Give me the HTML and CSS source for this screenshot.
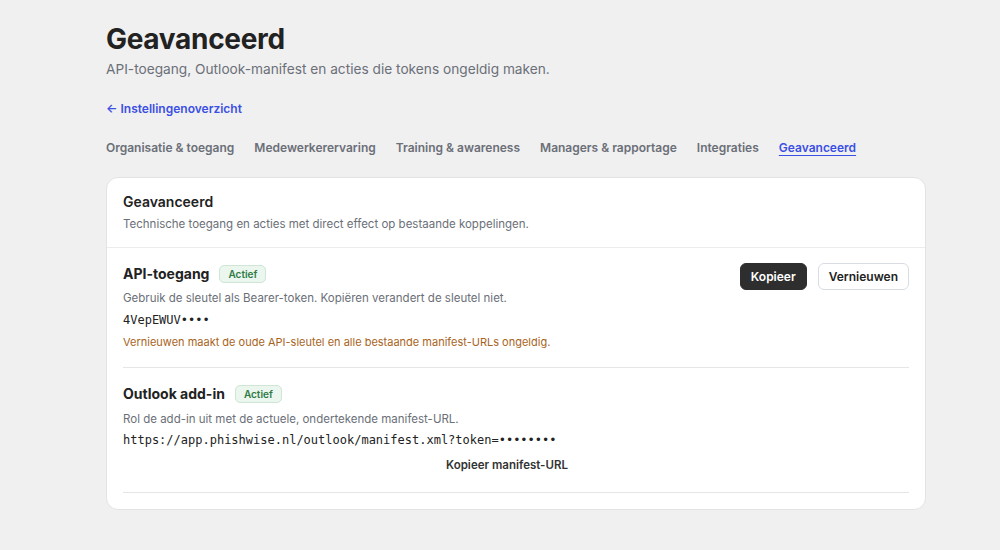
FILE: index.html
```html
<!DOCTYPE html>
<html lang="nl">
<head>
    <meta charset="UTF-8">
    <meta name="viewport" content="width=device-width, initial-scale=1.0">
    <title>Geavanceerd - Instellingen</title>
    <link rel="stylesheet" href="styles.css">
</head>
<body>
    <main class="page">
        <header class="page-header">
            <h1>Geavanceerd</h1>
            <p class="page-sub">API-toegang, Outlook-manifest en acties die tokens ongeldig maken.</p>
        </header>

        <a class="back-link" href="#">&larr; Instellingenoverzicht</a>

        <nav class="tabs">
            <a href="#">Organisatie &amp; toegang</a>
            <a href="#">Medewerkerervaring</a>
            <a href="#">Training &amp; awareness</a>
            <a href="#">Managers &amp; rapportage</a>
            <a href="#">Integraties</a>
            <a href="#" class="active">Geavanceerd</a>
        </nav>

        <section class="card">
            <div class="card-head">
                <h2>Geavanceerd</h2>
                <p>Technische toegang en acties met direct effect op bestaande koppelingen.</p>
            </div>

            <div class="card-body">
                <div class="setting">
                    <div class="setting-top">
                        <div class="setting-title">
                            <h3>API-toegang</h3>
                            <span class="badge">Actief</span>
                        </div>
                        <div class="actions">
                            <button type="button" class="btn btn-dark">Kopieer</button>
                            <button type="button" class="btn btn-light">Vernieuwen</button>
                        </div>
                    </div>
                    <p class="setting-desc">Gebruik de sleutel als Bearer-token. Kopiëren verandert de sleutel niet.</p>
                    <code class="secret">4VepEWUV••••</code>
                    <p class="warning">Vernieuwen maakt de oude API-sleutel en alle bestaande manifest-URLs ongeldig.</p>
                </div>

                <div class="setting">
                    <div class="setting-top">
                        <div class="setting-title">
                            <h3>Outlook add-in</h3>
                            <span class="badge">Actief</span>
                        </div>
                    </div>
                    <p class="setting-desc">Rol de add-in uit met de actuele, ondertekende manifest-URL.</p>
                    <code class="secret url">https://app.phishwise.nl/outlook/manifest.xml?token=••••••••</code>
                    <div class="link-row">
                        <button type="button" class="btn-text">Kopieer manifest-URL</button>
                    </div>
                </div>
            </div>
        </section>
    </main>
</body>
</html>
```

FILE: styles.css
```css
body {
    font-family: Inter, "Noto Sans", sans-serif;
    background-color: #f0f0f0;
    color: #222;
    margin: 0;
    padding: 0;
}
.page {
    width: 820px;
    margin-left: 106px;
    padding: 22px 0 40px;
    box-sizing: border-box;
}
h1 {
    font-size: 28px;
    font-weight: 700;
    margin: 0;
    letter-spacing: -0.3px;
    color: #222;
}
.page-sub {
    margin: 5px 0 0;
    font-size: 13.7px;
    color: #6b6f78;
}
.back-link {
    display: inline-block;
    margin-top: 24px;
    font-size: 12px;
    font-weight: 600;
    color: #3b4fe4;
    text-decoration: none;
}
.tabs {
    display: flex;
    gap: 20px;
    margin-top: 23px;
}
.tabs a {
    font-size: 12px;
    font-weight: 600;
    color: #6b6f78;
    text-decoration: none;
}
.tabs a.active {
    color: #3b4fe4;
    text-decoration: underline;
    text-underline-offset: 3px;
}
.card {
    margin-top: 22px;
    background: #fff;
    border: 1px solid #e3e3e3;
    border-radius: 12px;
}
.card-head {
    padding: 15px 16px 15px;
    border-bottom: 1px solid #ececec;
}
.card-head h2 {
    margin: 0;
    font-size: 14px;
    line-height: 18px;
    font-weight: 600;
}
.card-head p {
    margin: 5px 0 0;
    font-size: 11.5px;
    line-height: 16px;
    color: #6b6f78;
}
.card-body {
    padding: 0 16px 16px;
}
.setting {
    padding: 16px 0 17px;
    border-bottom: 1px solid #e6e6e6;
}
.setting-top {
    display: flex;
    justify-content: space-between;
    align-items: flex-start;
}
.setting-title {
    display: flex;
    align-items: center;
    gap: 10px;
    margin-top: 1px;
}
.setting-title h3 {
    margin: 0;
    font-size: 14px;
    line-height: 18px;
    font-weight: 700;
}
.badge {
    font-size: 10px;
    line-height: 12px;
    font-weight: 600;
    color: #2f7a45;
    background: #eaf6ee;
    border: 1px solid #cfe6d6;
    border-radius: 5px;
    padding: 2px 8px;
}
.actions {
    display: flex;
    gap: 11px;
    margin-top: -1px;
    margin-bottom: -8px;
}
.btn {
    font-family: inherit;
    font-size: 12px;
    line-height: 15px;
    font-weight: 600;
    border-radius: 6px;
    padding: 5px 10px;
    cursor: pointer;
}
.btn-dark {
    background: #2e2e2e;
    color: #fff;
    border: 1px solid #2e2e2e;
}
.btn-light {
    background: #fff;
    color: #222;
    border: 1px solid #d9dde3;
}
.setting-desc {
    margin: 7px 0 0;
    font-size: 11.5px;
    line-height: 16px;
    color: #6b6f78;
}
.setting + .setting .setting-desc {
    margin-top: 8px;
}
.secret {
    display: block;
    margin-top: 6px;
    font-family: "DejaVu Sans Mono", monospace;
    font-size: 12px;
    line-height: 16px;
    color: #222;
}
.secret.url {
    margin-top: 5px;
}
.warning {
    margin: 6px 0 0;
    font-size: 11px;
    line-height: 16px;
    color: #a8641c;
}
.link-row {
    display: flex;
    justify-content: center;
    margin-top: 5px;
    padding-right: 18px;
}
.setting:last-child {
    padding-bottom: 15px;
}
.btn-text {
    font-family: inherit;
    font-size: 11.5px;
    line-height: 16px;
    font-weight: 600;
    background: none;
    border: none;
    color: #333;
    padding: 4px 0;
    cursor: pointer;
}
```
